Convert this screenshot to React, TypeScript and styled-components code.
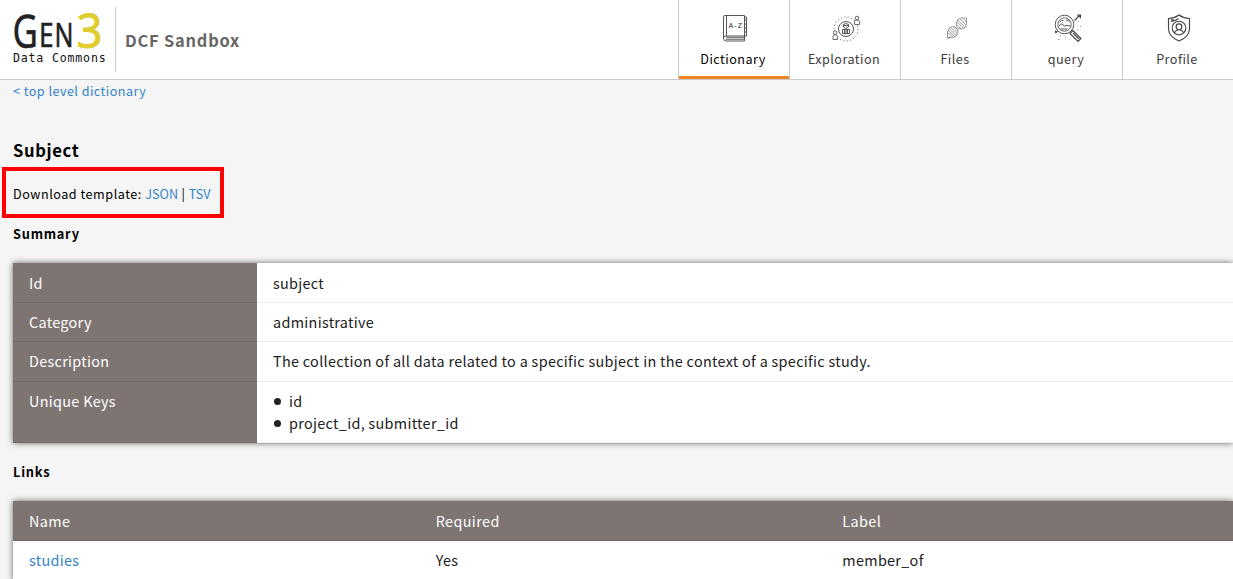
import React from "react";
import styled, { createGlobalStyle } from "styled-components";

const GlobalStyle = createGlobalStyle`
  * { box-sizing: border-box; }
  body {
    margin: 0;
    height: 579px;
    overflow: hidden;
    background: #f5f5f5;
    color: #212121;
    font-family: "Noto Sans CJK SC", "Noto Sans", sans-serif;
    font-size: 14.4px;
    letter-spacing: 0.31px;
  }
`;

const Header = styled.header`
  display: flex;
  height: 80px;
  background: #fff;
  border-bottom: 1px solid #c9c9c9;
`;

const Brand = styled.div`
  display: flex;
  flex: 1;
  padding: 7px 0 0 12px;
`;

const BrandName = styled.div`
  height: 65px;
  margin-left: 7px;
  padding-left: 9px;
  border-left: 1px solid #c9c9c9;
  font-size: 16.4px;
  line-height: 66px;
  font-weight: 700;
  letter-spacing: 0.8px;
  color: #666;
`;

const Nav = styled.nav`
  display: flex;
`;

const Tab = styled.a<{ $active?: boolean }>`
  display: flex;
  flex-direction: column;
  align-items: center;
  width: 111px;
  height: 79px;
  padding: 12px 2px 0 0;
  border-left: 1px solid #c9c9c9;
  box-shadow: ${(p) => (p.$active ? "inset 0 -3px #ef8523" : "none")};
  color: ${(p) => (p.$active ? "#000" : "#3c3c3c")};
  font-size: 12.6px;
  line-height: 18px;
  letter-spacing: 0.45px;

  svg { margin: 0 0 6px 4px; }
`;

const Page = styled.main`
  padding-left: 13px;
`;

const Link = styled.a`
  color: #3283c8;
`;

const BackLink = styled(Link)`
  display: block;
  font-size: 12.6px;
  line-height: 22px;
  letter-spacing: 0.46px;
`;

const Title = styled.h3`
  margin: 36px 0 0;
  font-size: 16.6px;
  font-weight: 700;
  line-height: 24px;
  letter-spacing: 0.65px;
  color: #000;
`;

const Callout = styled.div`
  width: 222px;
  height: 51px;
  margin: 5px 0 0 -11px;
  padding-left: 7px;
  border: 4px solid #f00;
  font-size: 12.6px;
  line-height: 46px;
  letter-spacing: 0.53px;
  color: #000;

  ${Link} { letter-spacing: 0.05px; }
`;

const SectionTitle = styled.h4<{ $top: number }>`
  margin: ${(p) => p.$top}px 0 18px;
  font-size: 12.8px;
  font-weight: 700;
  line-height: 22px;
  letter-spacing: 0.75px;
  color: #000;
`;

const Panel = styled.div`
  background: #fff;
  box-shadow: 0 0 6px rgba(0, 0, 0, 0.6);
`;

const Row = styled.div<{ $height: number; $pad?: number }>`
  display: flex;
  height: ${(p) => p.$height}px;
  line-height: 22px;

  > * { padding: ${(p) => p.$pad ?? 8}px 16px 0; }
`;

const Key = styled.div`
  width: 244px;
  background: #7e7573;
  border-bottom: 1px solid #736a69;
  color: #fff;
`;

const Value = styled.div`
  flex: 1;
  border-bottom: 1px solid #ececec;
`;

const List = styled.ul`
  margin: 0;
  padding: 0;
  list-style: none;
`;

const Item = styled.li`
  display: flex;
  align-items: center;

  &::before {
    content: "";
    width: 7px;
    height: 7px;
    margin: 1px 8px 0 1px;
    border-radius: 50%;
    background: #212121;
  }
`;

const GridRow = styled.div<{ $head?: boolean }>`
  display: grid;
  grid-template-columns: repeat(3, 1fr);
  height: 40px;
  line-height: ${(p) => (p.$head ? 40 : 38)}px;
  ${(p) => p.$head && "background: #7e7573; color: #fff; border-bottom: 1px solid #6f6665; letter-spacing: 0.4px;"}
`;

const Cell = styled.div`
  padding-left: 16px;
`;

const Logo = () => (
  <svg width="96" height="60" viewBox="12 7 96 60">
    <g fontFamily="Noto Sans, sans-serif" fill="#222" stroke="#222" strokeWidth=".5">
      <text transform="translate(12.6 47.5) scale(.76 1)" fontSize="46">G</text>
      <text transform="translate(39 47) scale(.82 1)" fontSize="32">E</text>
      <text transform="translate(54.500 47) scale(.78 1)" fontSize="32">N</text>
      <text transform="translate(76.500 47.500) scale(.98 1)" fontSize="46.500" fill="#dfcd2d" stroke="#dfcd2d" strokeWidth=".9">3</text>
    </g>
    <text x="13" y="62" fontSize="11.600" fontFamily="DejaVu Sans Mono, monospace" fill="#111" textLength="93">Data Commons</text>
  </svg>
);

const icon = { width: 32, height: 32, viewBox: "0 0 32 32", fill: "none", stroke: "#444", strokeWidth: 0.9 };

const DictionaryIcon = () => (
  <svg {...icon}>
    <path d="M6 3.500H25.500V24H6.500Q4.500 24 4.500 26V5Q4.500 3.500 6 3.500M7.500 3.500V24M4.500 26Q4.500 29 7 29H25.500V24" />
    <path d="M7 25.300H25M7 27.300H25" stroke="#888" strokeWidth="1.500" />
    <path d="M25.500 5h2v3h-2m2 0v4h-2m2 0v4h-2m2 0v4h-2m2 0v4h-2" strokeWidth=".9" />
    <text x="9.500" y="16" fontSize="7.500" fontFamily="Noto Sans, sans-serif" fill="#333" stroke="none" textLength="14">A-Z</text>
  </svg>
);

const ExplorationIcon = () => (
  <svg {...icon}>
    <circle cx="16" cy="17" r="7.500" />
    <circle cx="16" cy="17" r="12" strokeDasharray="1.2 2.2" strokeWidth=".8" />
    <path d="M13.500 12.500q2.500-2 5 0v2.500q-2.500 3-5 0zM13.300 13.500h5.400M12.500 21.500v-4h7v4zM14.500 18v3.500M16 18v3.500M17.500 18v3.500" strokeWidth=".9" />
    <g fill="#fff" strokeWidth=".8">
      <circle cx="27" cy="6" r="1.800" />
      <path d="M24.500 12.500V9.500q0-1.500 2.500-1.500t2.500 1.500v3z" />
      <circle cx="5.200" cy="20.500" r="1.800" />
      <path d="M3 27.500v-3q0-1.700 2.200-1.700t2.200 1.700v3z" />
    </g>
  </svg>
);

const FilesIcon = () => (
  <svg {...icon} viewBox="1 0 32 32" stroke="#808080" strokeWidth=".8">
    <path d="M7.500 25.500V20Q8 15.500 12.500 14.500Q18 15 18 20Q17.500 24.500 13 25.500zM16.500 14.500V10.500Q17 6.500 21 6H26.500V11.500Q26 16.500 21.500 17Q17.500 17 16.500 14.500M7 26h3" />
    <path d="M8 20.500l5 5M8 18.200l7 6.800M9.500 17l7 6.500M11 15.700l6.500 6M13.500 15l4.500 4.500M16.800 12.500l4.500 4.500M17 10l6.500 6M18 8.300l6.800 6.500M20 7l6 6M23 6.500l3.500 3.500" />
  </svg>
);

const QueryIcon = () => (
  <svg {...icon} viewBox="1 0 32 32">
    <circle cx="13.500" cy="12.500" r="9.300" />
    <circle cx="13.500" cy="12.500" r="6.700" strokeWidth=".8" />
    <path d="M7.500 14l3-2 3 2 2.500-.5 3.500.5M8.500 10q2-2 4-1.500M15 8q2 0 3.500 1.500M9.500 17h7" />
    <path d="M20 20.500l2-2 8 8-3 3-8-8zM22 21l6 6M23.500 8.500L28 4M27 3h2.500v2.500zM4.500 21l2-2M4.500 18.500v2" strokeWidth="1.100" />
    <path d="M7 27.500h1.500M14 25h1M27 9.500h1M29 14.500h1M26 18h1M9 24h1" stroke="#888" />
  </svg>
);

const ProfileIcon = () => (
  <svg {...icon} strokeWidth="1.150">
    <path d="M16 3Q20 6 26.500 6.500V17Q26 25 16 29Q6 25 5.500 17V6.500Q12 6 16 3Z" />
    <circle cx="16" cy="16" r="6.800" />
    <circle cx="16" cy="14.800" r="2.900" />
    <path d="M11.500 20.800q.5-2.300 3-2.600v-1M20.500 20.800q-.5-2.300-3-2.600v-1M8 9.500q4-.3 7.500-3M8 7.800h3" />
  </svg>
);

const tabs = [
  { label: "Dictionary", Icon: DictionaryIcon, active: true },
  { label: "Exploration", Icon: ExplorationIcon },
  { label: "Files", Icon: FilesIcon },
  { label: "query", Icon: QueryIcon },
  { label: "Profile", Icon: ProfileIcon },
];

export default function App() {
  return (
    <>
      <GlobalStyle />
      <Header>
        <Brand>
          <Logo />
          <BrandName>DCF Sandbox</BrandName>
        </Brand>
        <Nav>
          {tabs.map(({ label, Icon, active }) => (
            <Tab key={label} $active={active}>
              <Icon />
              <span>{label}</span>
            </Tab>
          ))}
        </Nav>
      </Header>
      <Page>
        <BackLink>&lt; top level dictionary</BackLink>
        <Title>Subject</Title>
        <Callout>
          Download template: <Link>JSON</Link> | <Link>TSV</Link>
        </Callout>
        <SectionTitle $top={5}>Summary</SectionTitle>
        <Panel>
          <Row $height={40} $pad={9}><Key>Id</Key><Value>subject</Value></Row>
          <Row $height={39}><Key>Category</Key><Value>administrative</Value></Row>
          <Row $height={40}>
            <Key>Description</Key>
            <Value>The collection of all data related to a specific subject in the context of a specific study.</Value>
          </Row>
          <Row $height={61}>
            <Key>Unique Keys</Key>
            <Value>
              <List>
                <Item>id</Item>
                <Item>project_id, submitter_id</Item>
              </List>
            </Value>
          </Row>
        </Panel>
        <SectionTitle $top={18}>Links</SectionTitle>
        <Panel>
          <GridRow $head><Cell>Name</Cell><Cell>Required</Cell><Cell>Label</Cell></GridRow>
          <GridRow><Cell><Link>studies</Link></Cell><Cell>Yes</Cell><Cell>member_of</Cell></GridRow>
        </Panel>
      </Page>
    </>
  );
}
